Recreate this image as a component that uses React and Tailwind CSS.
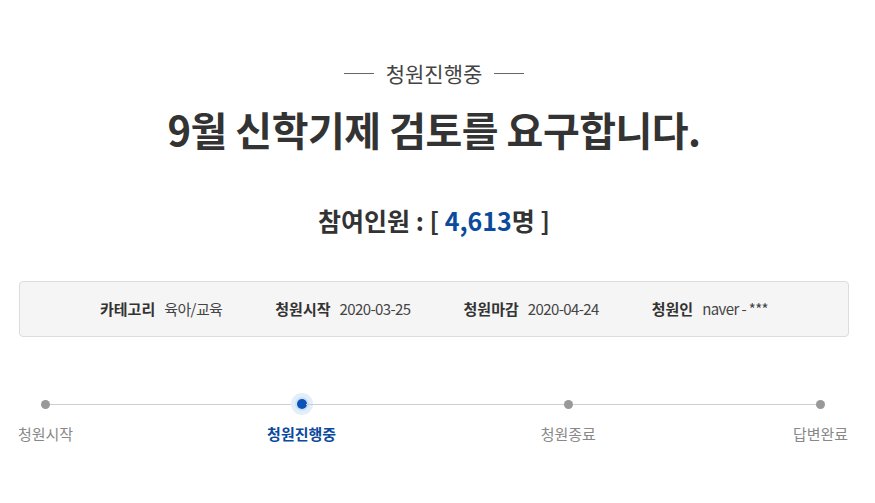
import React from 'react';

const steps = [
  { label: '청원시작', active: false },
  { label: '청원진행중', active: true },
  { label: '청원종료', active: false },
  { label: '답변완료', active: false },
];

// relative lengths of the connecting segments
const segs = ['flex-[256]', 'flex-[267]', 'flex-[252]'];

const info = [
  { k: '카테고리', v: '육아/교육' },
  { k: '청원시작', v: '2020-03-25' },
  { k: '청원마감', v: '2020-04-24' },
  { k: '청원인', v: 'naver - ***' },
];

const Dot = ({ active }) =>
  active ? (
    <span className="flex h-[9px] w-[9px] shrink-0 items-center justify-center">
      <span className="flex h-[22px] w-[22px] shrink-0 items-center justify-center rounded-full bg-[#e3eefb]">
        <span className="h-[14px] w-[14px] rounded-full bg-[#cfe1f7] p-[2px]">
          <span className="block h-[10px] w-[10px] rounded-full bg-[#0a55b5]" />
        </span>
      </span>
    </span>
  ) : (
    <span className="h-[9px] w-[9px] shrink-0 rounded-full bg-[#999]" />
  );

export default function App() {
  return (
    <div
      className="min-h-screen bg-white text-[#333]"
      style={{ fontFamily: '"Noto Sans CJK KR", "Noto Sans", sans-serif' }}
    >
      <div className="w-[868px]">
        <div className="flex flex-col items-center pt-[58px]">
          {/* status */}
          <div className="flex items-center gap-[12px]">
            <span className="h-px w-[30px] bg-[#666]" />
            <span className="text-[21px] leading-[30px] text-[#444]">청원진행중</span>
            <span className="h-px w-[30px] bg-[#666]" />
          </div>

          <h1 className="mt-[14px] text-[40px] font-bold leading-[54px] tracking-[-0.5px]">
            9월 신학기제 검토를 요구합니다.
          </h1>

          <p className="mt-[46px] text-[25px] font-bold leading-[36px]">
            참여인원 : [ <span className="text-[#0b4a9c]">4,613</span>명 ]
          </p>
        </div>

        {/* info box */}
        <div className="ml-[19px] mt-[43px] flex h-[56px] w-[830px] items-center justify-center rounded-[4px] border border-[#dcdcdc] bg-[#f5f5f5] text-[15px]">
          {info.map((it, i) => (
            <div key={it.k} className={`flex items-center gap-[9px] ${i < 3 ? 'mr-[53px]' : ''}`}>
              <span className="font-bold">{it.k}</span>
              <span className="tracking-[-0.6px] text-[#444]">{it.v}</span>
            </div>
          ))}
        </div>

        {/* progress */}
        <div className="ml-[19px] mt-[56px] w-[830px]">
          <div className="flex h-[22px] items-center pl-[22px] pr-[24px]">
            {steps.map((s, i) => (
              <React.Fragment key={s.label}>
                <Dot active={s.active} />
                {i < steps.length - 1 && <span className={`h-px ${segs[i]} bg-[#cfcfcf]`} />}
              </React.Fragment>
            ))}
          </div>
          <div className="mt-[8px] flex pl-[22px] pr-[24px]">
            {steps.map((s, i) => (
              <React.Fragment key={s.label}>
                <div className="flex w-[9px] shrink-0 justify-center">
                  <span
                    className={`whitespace-nowrap text-[15px] leading-[22px] ${
                      s.active ? 'font-bold text-[#0b4a9c]' : 'text-[#888]'
                    }`}
                  >
                    {s.label}
                  </span>
                </div>
                {i < steps.length - 1 && <span className={segs[i]} />}
              </React.Fragment>
            ))}
          </div>
        </div>
      </div>
    </div>
  );
}
